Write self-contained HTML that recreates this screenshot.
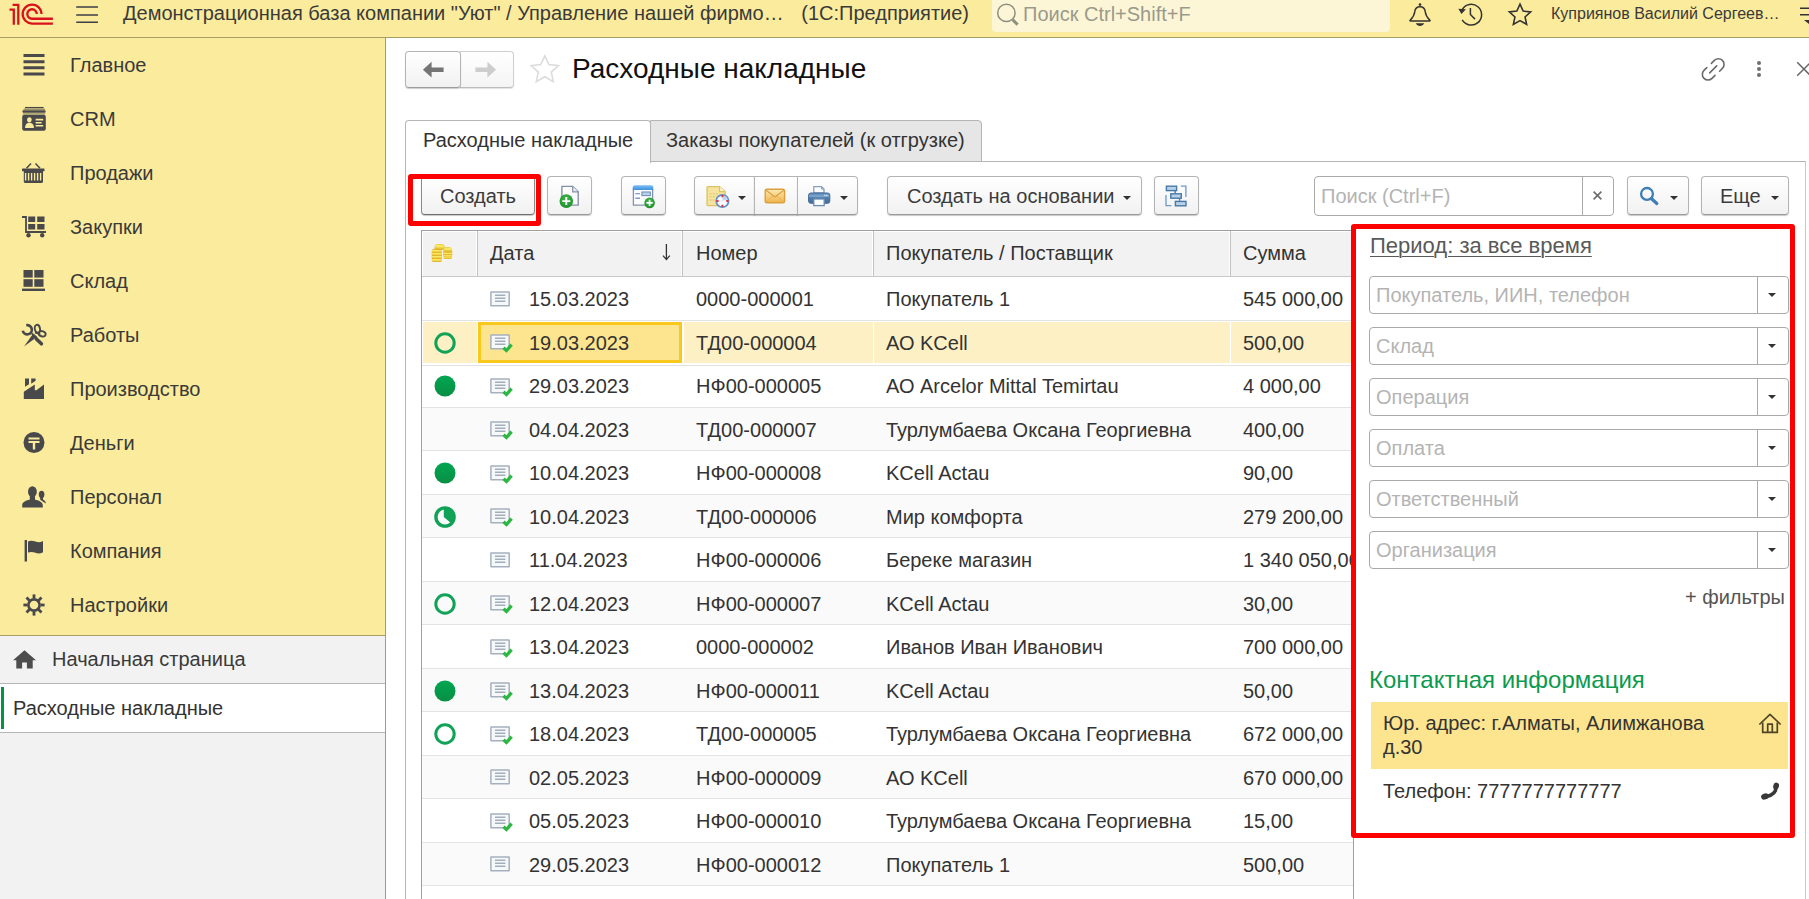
<!DOCTYPE html>
<html lang="ru">
<head>
<meta charset="utf-8">
<title>Расходные накладные</title>
<style>
*{box-sizing:border-box;margin:0;padding:0}
html,body{width:1809px;height:899px;overflow:hidden;background:#fff}
body{font-family:"Liberation Sans",sans-serif;font-size:20px;color:#333;position:relative}
.abs{position:absolute}
/* top bar */
#top{position:absolute;left:0;top:0;width:1809px;height:38px;background:#fbeb9c;border-bottom:1px solid #a89d63}
#top .title{position:absolute;left:123px;top:1px;font-size:20px;line-height:24px;color:#3a3a3a;white-space:nowrap}
#top .search{position:absolute;left:992px;top:-4px;width:398px;height:36px;background:#fdf6d6;border-radius:4px}
#top .search span{position:absolute;left:31px;top:6px;font-size:20px;line-height:24px;color:#9a9a8c;white-space:nowrap}
#top .user{position:absolute;left:1551px;top:3px;font-size:16px;line-height:22px;color:#3a3a3a;white-space:nowrap}
/* sidebar */
#side{position:absolute;left:0;top:38px;width:386px;height:598px;background:#fbeb9c;border-right:1px solid #a89d63;border-bottom:1px solid #a89d63}
#side .it{position:absolute;left:70px;font-size:20px;line-height:24px;color:#3a3a3a;white-space:nowrap}
#side svg{position:absolute}
#wins{position:absolute;left:0;top:636px;width:386px;height:263px;background:#f2f2f2;border-right:1px solid #a89d63}
#wins .r1{position:absolute;left:0;top:0;width:385px;height:48px;border-bottom:1px solid #b5b5b5}
#wins .r1 span{position:absolute;left:52px;top:11px;font-size:20px;line-height:24px;color:#3a3a3a;white-space:nowrap}
#wins .r2{position:absolute;left:0;top:48px;width:385px;height:49px;background:#fff;border-bottom:1px solid #b5b5b5}
#wins .r2 i{position:absolute;left:1px;top:3px;width:3px;height:42px;background:#009646}
#wins .r2 span{position:absolute;left:13px;top:12px;font-size:20px;line-height:24px;color:#333;white-space:nowrap}
/* buttons */
.btn{position:absolute;top:176px;height:39px;border:1px solid #b4b4b4;border-bottom-color:#9a9a9a;border-radius:4px;background:linear-gradient(#ffffff,#f1f1f1);box-shadow:0 1px 1px rgba(0,0,0,.22);font-size:20px;line-height:39px;color:#3c3c3c;white-space:nowrap;text-align:center}
.caret{position:absolute;width:0;height:0;border-left:4px solid transparent;border-right:4px solid transparent;border-top:4px solid #333}
/* table */
#tbl{position:absolute;left:421px;top:230px;width:933px;height:680px;border:1px solid #a0a0a0;overflow:hidden;background:#fff}
#tbl .hd{position:absolute;left:0;top:0;width:100%;height:46px;background:#f2f2f2;border-bottom:1px solid #c8c8c8;box-shadow:inset 1px 1px 0 #fff}
#tbl .hd span{position:absolute;top:10px;font-size:20px;line-height:24px;color:#333;white-space:nowrap}
#tbl .hd b{position:absolute;top:0;width:2px;height:45px;background:#c2c2c2;border-left:1px solid #fff}
.row{position:absolute;left:0;width:931px;height:43.5px;border-bottom:1px solid #e3e3e3;font-size:20px;line-height:24px;color:#333;white-space:nowrap}
.row.alt{background:#fafafa}
.row.sel{height:45px}
.row span{position:absolute;top:9.5px}
.row .d{left:107px}.row .n{left:274px}.row .c{left:464px}.row .s{left:821px}
.row svg{position:absolute}
.row u{position:absolute;top:1.5px;height:41px;background:#fdf0c5}
.row em{position:absolute;left:56px;top:1.5px;width:204px;height:41px;background:#fde58f;border:3px solid #f9c81d}
/* right panel */
.inp{position:absolute;left:1369px;width:420px;height:38px;border:1px solid #a9a9a9;border-radius:4px;background:#fff}
.inp span{position:absolute;left:6px;top:6px;font-size:20px;line-height:24px;color:#b4b4b4;white-space:nowrap}
.inp b{position:absolute;left:387px;top:0;width:1px;height:36px;background:#a9a9a9}
.inp i{position:absolute;left:398px;top:16px;width:0;height:0;border-left:4px solid transparent;border-right:4px solid transparent;border-top:4px solid #333}
</style>
</head>
<body>
<!-- TOPBAR -->
<div id="top">
  <svg class="abs" style="left:0;top:0" width="110" height="37" viewBox="0 0 110 37">
    <g fill="none" stroke="#d9131c" stroke-width="2.3">
      <path d="M12.6 4.8H18.3V24.8"/>
      <path d="M9.5 9.6H13.8V24.8"/>
      <path d="M41.55 14.1A9.45 9.45 0 1 0 32.1 23.55H52.9"/>
      <path d="M36.8 14.1A4.75 4.75 0 1 0 32.05 18.75H52.9"/>
    </g>
    <path d="M76.2 7H98M76.2 15H98M76.2 22.2H98" stroke="#3f3f46" stroke-width="1.5"/>
  </svg>
  <div class="title">Демонстрационная база компании "Уют" / Управление нашей фирмо…&nbsp;&nbsp; <span style="margin-left:1px">(1С:Предприятие)</span></div>
  <div class="search"><span>Поиск Ctrl+Shift+F</span></div>
  <svg class="abs" style="left:995px;top:2px" width="26" height="26" viewBox="0 0 26 26">
    <circle cx="11.4" cy="10.9" r="8.7" fill="none" stroke="#8f8f80" stroke-width="1.5"/>
    <path d="M17.6 17.6l5 5" stroke="#8f8f80" stroke-width="3"/>
  </svg>
  <svg class="abs" style="left:1405px;top:0" width="30" height="30" viewBox="0 0 30 30">
    <circle cx="15" cy="4.6" r="1.3" fill="#333"/>
    <path d="M15 6.700c-3.300 0-5 2.300-5.300 5.300-.400 3.700-1.700 5.500-4.600 8.300-.300.300-.100.700.300.700h19.200c.400 0 .600-.400.300-.700-2.900-2.800-4.200-4.600-4.600-8.300-.300-3-2-5.300-5.300-5.300z" fill="none" stroke="#333" stroke-width="1.5" stroke-linejoin="round"/>
    <path d="M10.8 23.300h8.400c-.9 1.700-2.400 2.600-4.200 2.600s-3.300-.9-4.200-2.600z" fill="#333"/>
  </svg>
  <svg class="abs" style="left:1455px;top:0" width="30" height="30" viewBox="0 0 30 30">
    <path d="M7.200 9.500A10.400 10.400 0 1 1 7.200 19.900" fill="none" stroke="#333" stroke-width="1.5"/>
    <path d="M3.400 8.800l7.500 0.500l-4.500 4.700z" fill="#333"/>
    <path d="M15.400 8.100v6.400l4.600 4.600" fill="none" stroke="#333" stroke-width="1.5"/>
  </svg>
  <svg class="abs" style="left:1505px;top:0" width="30" height="30" viewBox="0 0 30 30">
    <path d="M15 4.200l3.150 6.900l7.500 0.800l-5.600 5.100l1.600 7.400l-6.650-3.800l-6.650 3.800l1.600-7.400l-5.600-5.100l7.500-0.800z" fill="none" stroke="#333" stroke-width="1.6" stroke-linejoin="miter"/>
  </svg>
  <svg class="abs" style="left:1797px;top:4px" width="12" height="22" viewBox="0 0 12 22">
    <path d="M3 4.300h9M3 10.700h9" stroke="#333" stroke-width="1.6"/>
    <path d="M7 16l5 0l0 4z" fill="#333"/>
  </svg>
  <div class="user">Куприянов Василий Сергеев…</div>
</div>
<!-- SIDEBAR -->
<div id="side">
  <div class="it" style="top:15px">Главное</div>
  <div class="it" style="top:69px">CRM</div>
  <div class="it" style="top:123px">Продажи</div>
  <div class="it" style="top:177px">Закупки</div>
  <div class="it" style="top:231px">Склад</div>
  <div class="it" style="top:285px">Работы</div>
  <div class="it" style="top:339px">Производство</div>
  <div class="it" style="top:393px">Деньги</div>
  <div class="it" style="top:447px">Персонал</div>
  <div class="it" style="top:501px">Компания</div>
  <div class="it" style="top:555px">Настройки</div>
  <!-- sidebar icons: 28x28 boxes at left:20, top:13+54*i -->
  <svg style="left:20px;top:13px" width="28" height="28" viewBox="0 0 28 28"><path d="M3.500 4.500h21M3.500 10.700h21M3.500 16.800h21M3.500 22.900h21" stroke="#49494b" stroke-width="3"/></svg>
  <svg style="left:20px;top:67px" width="28" height="28" viewBox="0 0 28 28">
    <path d="M5 2.600h18.600" stroke="#49494b" stroke-width="1.300"/>
    <path d="M4 3.600h20.600l.8 1.400h-22.200z" fill="#9b9268"/>
    <rect x="2.400" y="5.200" width="23.200" height="2.600" rx="1" fill="#49494b"/>
    <path d="M2.800 8h22.400v1.600h-22.400z" fill="#b3a873"/>
    <rect x="2.200" y="9.800" width="23.600" height="16" rx="2" fill="#49494b"/>
    <ellipse cx="9.400" cy="14.800" rx="2.300" ry="2.600" fill="#fbeb9c"/>
    <path d="M5 23c0-3.400 1.800-5.300 4.400-5.300s4.600 1.900 4.600 5.300z" fill="#fbeb9c"/>
    <path d="M15.600 14.600h7.600M15.600 17.800h6M15.600 20.800h7.600" stroke="#fbeb9c" stroke-width="1.600"/>
  </svg>
  <svg style="left:20px;top:121px" width="28" height="28" viewBox="0 0 28 28">
    <path d="M6.500 9.200l4.500-4.700M20 9.200l-4.500-4.700" stroke="#49494b" stroke-width="1.500" fill="none"/>
    <rect x="2" y="9.400" width="22.500" height="2.800" rx=".6" fill="#49494b"/>
    <path d="M3.800 12h19.200v10.400a1.600 1.600 0 0 1-1.600 1.600h-16a1.600 1.600 0 0 1-1.600-1.600z" fill="#49494b"/>
    <path d="M5.600 14v7.500M8.600 14v7.500M11.600 14v7.500M14.600 14v7.500M17.600 14v7.500M20.600 14v7.500" stroke="#fbeb9c" stroke-width="1.400"/>
  </svg>
  <svg style="left:20px;top:175px" width="28" height="28" viewBox="0 0 28 28">
    <path d="M2 4h4v15h20" fill="none" stroke="#49494b" stroke-width="1.800"/>
    <rect x="8.200" y="3.500" width="7" height="5.500" fill="#49494b"/><rect x="17.200" y="3.500" width="7.300" height="5.500" fill="#49494b"/>
    <rect x="8.200" y="11" width="7" height="5.500" fill="#49494b"/><rect x="17.200" y="11" width="7.300" height="5.500" fill="#49494b"/>
    <circle cx="8.500" cy="22.200" r="2.200" fill="#49494b"/><circle cx="22.200" cy="22.200" r="2.200" fill="#49494b"/>
  </svg>
  <svg style="left:20px;top:229px" width="28" height="28" viewBox="0 0 28 28">
    <rect x="3.500" y="3" width="9.200" height="7.600" fill="#49494b"/><rect x="14.300" y="3" width="9.200" height="7.600" fill="#49494b"/>
    <rect x="3.500" y="12.200" width="9.200" height="7.600" fill="#49494b"/><rect x="14.300" y="12.200" width="9.200" height="7.600" fill="#49494b"/>
    <rect x="2" y="21.600" width="23" height="2.400" fill="#49494b"/>
  </svg>
  <svg style="left:20px;top:283px" width="28" height="28" viewBox="0 0 28 28">
    <path d="M2.600 8.800A4.600 4.600 0 1 0 7.200 4.200" fill="none" stroke="#49494b" stroke-width="2.600" transform="rotate(-12 7 8.600)"/>
    <ellipse cx="17.400" cy="7.800" rx="2.600" ry="4" fill="none" stroke="#49494b" stroke-width="1.900" transform="rotate(-12 17.400 7.800)"/>
    <ellipse cx="22.200" cy="12.800" rx="3.500" ry="2.600" fill="none" stroke="#49494b" stroke-width="1.900" transform="rotate(18 22.200 12.800)"/>
    <path d="M13.200 12.600l4 3.200l-13.200 9.800z" fill="#49494b"/>
    <path d="M11.500 12.200l5.400 5.200" stroke="#49494b" stroke-width="1.600"/>
    <path d="M16.400 18l5 4.800" stroke="#49494b" stroke-width="3.600" stroke-linecap="round"/>
    <path d="M15 11.600l5.300 1.400" stroke="#49494b" stroke-width="1.800"/>
  </svg>
  <svg style="left:20px;top:337px" width="28" height="28" viewBox="0 0 28 28">
    <path d="M3.800 16.800L14.800 9.600V14.800L16 15.600L24 9.400V24H3.800z" fill="#49494b"/>
    <path d="M5 3.600h4v5.600l-4 2.600z" fill="#49494b"/>
    <path d="M11.200 3.600h4.400v2.200l-4.400 3z" fill="#49494b"/>
  </svg>
  <svg style="left:20px;top:391px" width="28" height="28" viewBox="0 0 28 28">
    <circle cx="14" cy="13.500" r="10.500" fill="#49494b"/>
    <path d="M8.500 8.500h11v2.100h-11zM8.500 12h11v2.100h-4.300v6.400h-2.400v-6.400h-4.300z" fill="#fbeb9c"/>
  </svg>
  <svg style="left:20px;top:445px" width="28" height="28" viewBox="0 0 28 28">
    <ellipse cx="21.600" cy="11.400" rx="2.800" ry="3.700" fill="#49494b"/>
    <path d="M20.200 13.500h2.800v3c1.600.8 2.800 1.800 2.800 4.100l-2.300-1.600l-3.300-2.200z" fill="#49494b"/>
    <ellipse cx="12.400" cy="8.700" rx="4.400" ry="5.500" fill="#49494b"/>
    <path d="M9.800 12h5.200v4.600c3.400 1 7.800 2.200 7.800 5.800v2h-20.600v-2c0-3.600 4.200-4.800 7.600-5.800z" fill="#49494b"/>
  </svg>
  <svg style="left:20px;top:499px" width="28" height="28" viewBox="0 0 28 28">
    <rect x="4.600" y="3" width="2.400" height="21.500" fill="#49494b"/>
    <path d="M8 4.400c2.600-1.200 5.200-.6 7.500.200s4.800 1 7.500-.600v11.200c-2.700 1.600-5.200 1.400-7.500.600s-4.900-1.400-7.500-.200z" fill="#49494b"/>
  </svg>
  <svg style="left:20px;top:553px" width="28" height="28" viewBox="0 0 28 28">
    <g transform="translate(14 14)">
      <circle r="5.600" fill="none" stroke="#49494b" stroke-width="2.600"/>
      <g stroke="#49494b" stroke-width="2.800">
        <path d="M0 -6.500V-10.600"/><path d="M0 -6.500V-10.600" transform="rotate(45)"/><path d="M0 -6.500V-10.600" transform="rotate(90)"/><path d="M0 -6.500V-10.600" transform="rotate(135)"/>
        <path d="M0 -6.500V-10.600" transform="rotate(180)"/><path d="M0 -6.500V-10.600" transform="rotate(225)"/><path d="M0 -6.500V-10.600" transform="rotate(270)"/><path d="M0 -6.500V-10.600" transform="rotate(315)"/>
      </g>
    </g>
  </svg>
</div>
<div id="wins">
  <div class="r1"><span>Начальная страница</span><svg class="abs" style="left:12px;top:13px" width="26" height="21" viewBox="0 0 26 21"><path d="M12.500 1.200L24 11.200h-3.300v8.300h-5.800v-6h-4.800v6H4.300v-8.300H1z" fill="#4d4d4d"/></svg></div>
  <div class="r2"><i></i><span>Расходные накладные</span></div>
</div>
<!-- MAIN HEADER -->
<div id="main">
  <div class="abs" style="left:460px;top:51px;width:54px;height:37px;border:1px solid #cfcfcf;border-left:none;border-bottom-color:#bdbdbd;border-radius:0 4px 4px 0;background:linear-gradient(#fff,#f4f4f4);box-shadow:0 1px 1px rgba(0,0,0,.12)"></div>
  <div class="abs" style="left:405px;top:51px;width:56px;height:37px;border:1px solid #b4b4b4;border-bottom-color:#9c9c9c;border-radius:4px;background:linear-gradient(#fff,#f1f1f1);box-shadow:0 1px 1px rgba(0,0,0,.2)"></div>
  <svg class="abs" style="left:420px;top:60px" width="26" height="20" viewBox="0 0 26 20"><path d="M2.900 9.700l8.700-7.900v5.600h12v4.600h-12v5.600z" fill="#757575"/></svg>
  <svg class="abs" style="left:473px;top:60px" width="26" height="20" viewBox="0 0 26 20"><path d="M23.100 9.700l-8.700-7.900v5.600h-12v4.600h12v5.600z" fill="#cdcdcd"/></svg>
  <svg class="abs" style="left:528px;top:52px" width="34" height="34" viewBox="0 0 34 34"><path d="M16.800 3.800l4.050 8.800l9.600 1.050l-7.150 6.500l2 9.450l-8.500-4.850l-8.500 4.850l2-9.450l-7.150-6.500l9.600-1.050z" fill="none" stroke="#dcdcdc" stroke-width="1.6"/></svg>
  <div class="abs" style="left:572px;top:52px;font-size:28px;line-height:34px;color:#111;white-space:nowrap">Расходные накладные</div>
  <svg class="abs" style="left:1699px;top:56px" width="28" height="28" viewBox="0 0 28 28">
    <g fill="none" stroke="#6b6b6b" stroke-width="1.600" stroke-linecap="round">
      <path d="M12.400 7.400L15.400 4.400A5.600 5.600 0 0 1 23.400 12.400L20.600 15.200"/>
      <path d="M16 19.400L13 22.400A5.600 5.600 0 0 1 5 14.400L7.800 11.600"/>
      <path d="M10.700 16.900L17.700 9.900"/>
    </g>
  </svg>
  <svg class="abs" style="left:1754px;top:58px" width="10" height="22" viewBox="0 0 10 22"><circle cx="5" cy="5.100" r="2" fill="#6e6e6e"/><circle cx="5" cy="11.050" r="2" fill="#6e6e6e"/><circle cx="5" cy="17" r="2" fill="#6e6e6e"/></svg>
  <svg class="abs" style="left:1795px;top:60px" width="14" height="18" viewBox="0 0 14 18"><path d="M2.200 2.300l13.500 13.500M2.200 15.800l13.500-13.500" stroke="#666" stroke-width="1.500"/></svg>
  <!-- tabs -->
  <div class="abs" style="left:405px;top:161px;width:1401px;height:760px;border:1px solid #b5b5b5;border-right-color:#c8c8c8"></div>
  <div class="abs" style="left:650px;top:120px;width:332px;height:42px;background:#e6e6e6;border:1px solid #b5b5b5;border-radius:0 4px 0 0"></div>
  <div class="abs" style="left:405px;top:120px;width:246px;height:43px;background:#fff;border:1px solid #b5b5b5;border-bottom:none;border-radius:4px 4px 0 0"></div>
  <div class="abs" style="left:423px;top:128px;font-size:20px;line-height:24px;color:#333;white-space:nowrap">Расходные накладные</div>
  <div class="abs" style="left:666px;top:128px;font-size:20px;line-height:24px;color:#333;white-space:nowrap">Заказы покупателей (к отгрузке)</div>
  <!-- toolbar -->
  <div class="btn" style="left:421px;width:114px;border-color:#8a8a8a;border-bottom-color:#6e6e6e">Создать</div>
  <div class="btn" style="left:547px;width:45px">
    <svg class="abs" style="left:0;top:0" width="43" height="37" viewBox="0 0 43 37">
      <defs><radialGradient id="gp" cx=".5" cy=".35" r=".75"><stop offset="0" stop-color="#43b84c"/><stop offset="1" stop-color="#178a27"/></radialGradient>
      <linearGradient id="tb" x1="0" y1="0" x2="0" y2="1"><stop offset="0" stop-color="#79bdf6"/><stop offset="1" stop-color="#3f8fdb"/></linearGradient></defs>
      <path d="M13.900 9.400h10.800l5.500 5.400v13.300h-16.300z" fill="#fdfdfe" stroke="#8391a8" stroke-width="1.400"/>
      <path d="M24.700 9.400v5.400h5.500" fill="#e8edf3" stroke="#8391a8" stroke-width="1.200"/>
      <circle cx="18.300" cy="24.100" r="6.800" fill="url(#gp)"/>
      <path d="M18.300 20.100v8M14.300 24.100h8" stroke="#fff" stroke-width="1.900"/>
    </svg>
  </div>
  <div class="btn" style="left:621px;width:45px">
    <svg class="abs" style="left:0;top:0" width="43" height="37" viewBox="0 0 43 37">
      <path d="M11.400 12h19.200v16.200h-19.200z" fill="#fdfdfe" stroke="#8391a8" stroke-width="1.300"/>
      <path d="M10.800 13v-2.700a2 2 0 0 1 2-2h16.400a2 2 0 0 1 2 2v2.700z" fill="url(#tb)"/>
      <path d="M13.300 16.600h4.700M13.300 21.200h4.700" stroke="#7f9cc0" stroke-width="1.400"/>
      <rect x="19.900" y="15" width="8.400" height="3.600" fill="#bcd0e8" stroke="#6f92bf" stroke-width="1.100"/>
      <circle cx="27.600" cy="25.900" r="5.300" fill="url(#gp)"/>
      <path d="M27.600 22.700v6.400M24.400 25.900h6.400" stroke="#fff" stroke-width="1.700"/>
    </svg>
  </div>
  <div class="btn" style="left:694px;width:61px;border-radius:4px 0 0 4px">
    <svg class="abs" style="left:0;top:0" width="60" height="37" viewBox="0 0 60 37">
      <path d="M12.100 10.400a.8.8 0 0 1 .8-.8h11.600l5.600 5v13.200a.8.8 0 0 1-.8.800h-16.400a.8.8 0 0 1-.8-.800z" fill="#f6e49e" stroke="#dcc365" stroke-width="1.400"/>
      <path d="M24.500 9.600v5h5.600" fill="#fbf1c8" stroke="#dcc365" stroke-width="1.100"/>
      <path d="M14.500 16.800h9M14.500 19.700h7M14.500 23h5" stroke="#e3cd7d" stroke-width="1.300" stroke-dasharray="2.200 1"/>
      <circle cx="27.400" cy="24" r="6.200" fill="#fafcff" stroke="#6391c9" stroke-width="1.700"/>
      <path d="M27.400 24V18.600A5.400 5.400 0 0 1 32.500 22.300z" fill="#bcd3ee"/>
      <path d="M27.400 19.800V24h-3" fill="none" stroke="#e8eef6" stroke-width="1.400"/>
      <path d="M27.400 18v2.200M27.400 27.800V30M21.400 24h2.200M31.200 24h2.200" stroke="#e8313a" stroke-width="1.900"/>
    </svg>
    <i class="caret" style="left:43px;top:19px"></i>
  </div>
  <div class="btn" style="left:754px;width:44px;border-radius:0">
    <svg class="abs" style="left:0;top:0" width="41" height="37" viewBox="0 0 41 37">
      <defs><linearGradient id="ev" x1="0" y1="0" x2="0" y2="1"><stop offset="0" stop-color="#fce9b6"/><stop offset="1" stop-color="#f1b548"/></linearGradient></defs>
      <rect x="10.200" y="12.300" width="19.400" height="13.400" rx="1.800" fill="url(#ev)" stroke="#dba03d" stroke-width="1.400"/>
      <path d="M11 13.200l8.900 6.700l8.900-6.700" fill="none" stroke="#d9a041" stroke-width="1.200"/>
      <path d="M11.200 25l6.700-6M28.600 25l-6.700-6" fill="none" stroke="#e6b35a" stroke-width="1"/>
    </svg>
  </div>
  <div class="btn" style="left:797px;width:61px;border-radius:0 4px 4px 0">
    <svg class="abs" style="left:0;top:0" width="59" height="37" viewBox="0 0 59 37">
      <defs><linearGradient id="pr" x1="0" y1="0" x2="0" y2="1"><stop offset="0" stop-color="#5d8bb9"/><stop offset=".35" stop-color="#7ea5cc"/><stop offset=".45" stop-color="#4f7dac"/><stop offset="1" stop-color="#456f9c"/></linearGradient></defs>
      <path d="M15.800 16V9.600h7.700l2.500 2.500V16z" fill="#fdfeff" stroke="#8aa0bd" stroke-width="1.300"/>
      <path d="M23.500 9.600v2.500h2.500" fill="none" stroke="#8aa0bd" stroke-width="1"/>
      <rect x="10.600" y="16" width="21.200" height="10.300" rx="2.200" fill="url(#pr)" stroke="#42699a" stroke-width="1"/>
      <rect x="15.800" y="22" width="10.400" height="6.600" fill="#fdfeff" stroke="#6b8bb2" stroke-width="1.300"/>
      <path d="M26.300 18.400h1.200M28.300 18.400h1.200" stroke="#e8f0fa" stroke-width="1.200"/>
    </svg>
    <i class="caret" style="left:42px;top:19px"></i>
  </div>
  <div class="btn" style="left:887px;width:255px;text-align:left;padding-left:19px">Создать на основании<i class="caret" style="left:235px;top:19px"></i></div>
  <div class="btn" style="left:1154px;width:45px">
    <svg class="abs" style="left:-1px;top:-1px" width="45" height="39" viewBox="0 0 45 39">
      <path d="M26.900 10.100h5v11" fill="none" stroke="#6d9ac6" stroke-width="1.300"/>
      <path d="M12 19v10.700h5.400" fill="none" stroke="#6d9ac6" stroke-width="1.300"/>
      <path d="M21.100 15v2.200M25.600 22.600v2.200" stroke="#4679a8" stroke-width="1.400"/>
      <rect x="12.400" y="10.200" width="10.200" height="4.400" fill="#b9d0e7" stroke="#4679a8" stroke-width="1.400"/>
      <rect x="16.800" y="17.800" width="10.500" height="4.400" fill="#b9d0e7" stroke="#4679a8" stroke-width="1.400"/>
      <rect x="21.400" y="25.400" width="10.600" height="4.400" fill="#b9d0e7" stroke="#4679a8" stroke-width="1.400"/>
    </svg>
  </div>
  <!-- search -->
  <div class="abs" style="left:1314px;top:176px;width:300px;height:40px;border:1px solid #a9a9a9;border-radius:4px;background:#fff">
    <span class="abs" style="left:6px;top:7px;font-size:20px;line-height:24px;color:#b4b4b4;white-space:nowrap">Поиск (Ctrl+F)</span>
    <b class="abs" style="left:267px;top:0;width:1px;height:38px;background:#a9a9a9"></b>
    <svg class="abs" style="left:278px;top:14px" width="9" height="9" viewBox="0 0 9 9"><path d="M.6.6l7.800 7.800M8.400.6l-7.800 7.800" stroke="#6a6a6a" stroke-width="1.500"/></svg>
  </div>
  <div class="btn" style="left:1627px;width:62px">
    <svg class="abs" style="left:11px;top:8px" width="22" height="22" viewBox="0 0 22 22">
      <circle cx="8" cy="8.900" r="5.900" fill="none" stroke="#3d7fb5" stroke-width="2.300"/>
      <path d="M12.600 13.800l5.200 4.700" stroke="#3d7fb5" stroke-width="3.200" stroke-linecap="round"/>
    </svg>
    <i class="caret" style="left:42px;top:19px"></i>
  </div>
  <div class="btn" style="left:1701px;width:88px;text-align:left;padding-left:18px">Еще<i class="caret" style="left:69px;top:19px"></i></div>
  <!-- red highlight around Создать -->
  <div class="abs" style="left:408px;top:174px;width:133px;height:52px;border:5px solid #ff0000;border-radius:3px"></div>
  <!-- table -->
  <svg width="0" height="0" style="position:absolute"><defs>
    <linearGradient id="gg" x1="0" y1="0" x2="0" y2="1"><stop offset="0" stop-color="#00a651"/><stop offset="1" stop-color="#0a8f45"/></linearGradient>
                      </defs></svg>
  <div id="tbl">
    <div class="hd">
      <svg class="abs" style="left:9px;top:13px" width="23" height="19" viewBox="0 0 23 19">
        <defs><linearGradient id="cg" x1="0" y1="0" x2="0" y2="1"><stop offset="0" stop-color="#f3d23a"/><stop offset=".35" stop-color="#fff06e"/><stop offset="1" stop-color="#d9a81c"/></linearGradient></defs>
        <rect x="12.300" y="3.200" width="8.900" height="11.700" rx="3.600" fill="#e2b52a"/>
        <rect x="12.300" y="3.200" width="8.900" height="5" rx="3.200" fill="url(#cg)"/>
        <rect x="12.300" y="8.500" width="8.900" height="2.400" rx="1.200" fill="url(#cg)"/>
        <rect x="12.300" y="11.100" width="8.900" height="2.200" rx="1.100" fill="url(#cg)"/>
        <rect x="12.500" y="13.300" width="8.500" height="1.600" rx=".8" fill="url(#cg)"/>
        <rect x=".8" y="4.600" width="10" height="13.300" rx="3" fill="#e2b52a"/>
        <rect x=".8" y="5.800" width="10" height="2.800" rx="1.400" fill="url(#cg)"/>
        <rect x=".8" y="8.800" width="10" height="2.700" rx="1.350" fill="url(#cg)"/>
        <rect x=".8" y="11.700" width="10" height="2.800" rx="1.400" fill="url(#cg)"/>
        <rect x=".8" y="14.700" width="10" height="3.200" rx="1.600" fill="url(#cg)"/>
        <ellipse cx="8.700" cy="2.900" rx="4.800" ry="2.900" fill="url(#cg)" stroke="#e0b12a" stroke-width=".5"/>
      </svg>
      <b style="left:54px"></b><span style="left:68px">Дата</span>
      <svg class="abs" style="left:238px;top:12px" width="12" height="19" viewBox="0 0 12 19"><path d="M6.400 1v15.800M3 12.600l3.400 4l3.400-4" fill="none" stroke="#333" stroke-width="1.300"/></svg>
      <b style="left:259px"></b><span style="left:274px">Номер</span>
      <b style="left:450px"></b><span style="left:464px">Покупатель / Поставщик</span>
      <b style="left:807px"></b><span style="left:821px">Сумма</span>
    </div>
    <div class="row" style="top:46px"><svg style="left:68px;top:14px" width="25" height="21"><rect x="0.900" y="0.900" width="18.300" height="13.900" rx=".4" fill="#f7f8fa" stroke="#a5b0bf" stroke-width="1.500"/><path d="M5 4.200h10.400M5 7.200h10.400M5 10.200h10.400" stroke="#a3aebc" stroke-width="1.400"/></svg><span class="d" style="top:10px">15.03.2023</span><span class="n" style="top:10px">0000-000001</span><span class="c" style="top:10px">Покупатель 1</span><span class="s" style="top:10px">545 000,00</span></div>
    <div class="row sel" style="top:89.5px"><u style="left:1px;width:54px"></u><u style="left:262px;width:189px"></u><u style="left:452px;width:356px"></u><u style="left:809px;width:123px"></u><em></em><svg style="left:12px;top:11.5px" width="22" height="22"><circle cx="11" cy="11" r="9.200" fill="none" stroke="#10a257" stroke-width="3"/></svg><svg style="left:68px;top:13.5px" width="25" height="21"><rect x="0.900" y="0.900" width="18.300" height="13.900" rx=".4" fill="#f7f8fa" stroke="#a5b0bf" stroke-width="1.500"/><path d="M5 4.200h10.400M5 7.200h10.400M5 10.200h10.400" stroke="#a3aebc" stroke-width="1.400"/><path d="M13.500 13.800L16.400 16.500L21.600 10.700" fill="none" stroke="#2bb840" stroke-width="3.300"/></svg><span class="d" style="top:10.5px">19.03.2023</span><span class="n" style="top:10.5px">ТД00-000004</span><span class="c" style="top:10.5px">АО KCell</span><span class="s" style="top:10.5px">500,00</span></div>
    <div class="row" style="top:133px"><svg style="left:12px;top:11px" width="22" height="22"><circle cx="11" cy="11" r="10.500" fill="url(#gg)"/></svg><svg style="left:68px;top:14px" width="25" height="21"><rect x="0.900" y="0.900" width="18.300" height="13.900" rx=".4" fill="#f7f8fa" stroke="#a5b0bf" stroke-width="1.500"/><path d="M5 4.200h10.400M5 7.200h10.400M5 10.200h10.400" stroke="#a3aebc" stroke-width="1.400"/><path d="M13.500 13.800L16.400 16.500L21.600 10.700" fill="none" stroke="#2bb840" stroke-width="3.300"/></svg><span class="d" style="top:10px">29.03.2023</span><span class="n" style="top:10px">НФ00-000005</span><span class="c" style="top:10px">АО Arcelor Mittal Temirtau</span><span class="s" style="top:10px">4 000,00</span></div>
    <div class="row alt" style="top:176.5px"><svg style="left:68px;top:13.5px" width="25" height="21"><rect x="0.900" y="0.900" width="18.300" height="13.900" rx=".4" fill="#f7f8fa" stroke="#a5b0bf" stroke-width="1.500"/><path d="M5 4.200h10.400M5 7.200h10.400M5 10.200h10.400" stroke="#a3aebc" stroke-width="1.400"/><path d="M13.500 13.800L16.400 16.500L21.600 10.700" fill="none" stroke="#2bb840" stroke-width="3.300"/></svg><span class="d" style="top:10.5px">04.04.2023</span><span class="n" style="top:10.5px">ТД00-000007</span><span class="c" style="top:10.5px">Турлумбаева Оксана Георгиевна</span><span class="s" style="top:10.5px">400,00</span></div>
    <div class="row" style="top:220px"><svg style="left:12px;top:11px" width="22" height="22"><circle cx="11" cy="11" r="10.500" fill="url(#gg)"/></svg><svg style="left:68px;top:14px" width="25" height="21"><rect x="0.900" y="0.900" width="18.300" height="13.900" rx=".4" fill="#f7f8fa" stroke="#a5b0bf" stroke-width="1.500"/><path d="M5 4.200h10.400M5 7.200h10.400M5 10.200h10.400" stroke="#a3aebc" stroke-width="1.400"/><path d="M13.500 13.800L16.400 16.500L21.600 10.700" fill="none" stroke="#2bb840" stroke-width="3.300"/></svg><span class="d" style="top:10px">10.04.2023</span><span class="n" style="top:10px">НФ00-000008</span><span class="c" style="top:10px">KCell Actau</span><span class="s" style="top:10px">90,00</span></div>
    <div class="row alt" style="top:263.5px"><svg style="left:12px;top:11.5px" width="22" height="22"><circle cx="11" cy="11" r="9.100" fill="none" stroke="#10a257" stroke-width="3.400"/><path d="M9.800 11L9.800 2.100A9.200 9.200 0 0 1 17.500 17.500Z" fill="#10a257"/></svg><svg style="left:68px;top:13.5px" width="25" height="21"><rect x="0.900" y="0.900" width="18.300" height="13.900" rx=".4" fill="#f7f8fa" stroke="#a5b0bf" stroke-width="1.500"/><path d="M5 4.200h10.400M5 7.200h10.400M5 10.200h10.400" stroke="#a3aebc" stroke-width="1.400"/><path d="M13.500 13.800L16.400 16.500L21.600 10.700" fill="none" stroke="#2bb840" stroke-width="3.300"/></svg><span class="d" style="top:10.5px">10.04.2023</span><span class="n" style="top:10.5px">ТД00-000006</span><span class="c" style="top:10.5px">Мир комфорта</span><span class="s" style="top:10.5px">279 200,00</span></div>
    <div class="row" style="top:307px"><svg style="left:68px;top:14px" width="25" height="21"><rect x="0.900" y="0.900" width="18.300" height="13.900" rx=".4" fill="#f7f8fa" stroke="#a5b0bf" stroke-width="1.500"/><path d="M5 4.200h10.400M5 7.200h10.400M5 10.200h10.400" stroke="#a3aebc" stroke-width="1.400"/></svg><span class="d" style="top:10px">11.04.2023</span><span class="n" style="top:10px">НФ00-000006</span><span class="c" style="top:10px">Береке магазин</span><span class="s" style="top:10px">1 340 050,00</span></div>
    <div class="row alt" style="top:350.5px"><svg style="left:12px;top:11.5px" width="22" height="22"><circle cx="11" cy="11" r="9.200" fill="none" stroke="#10a257" stroke-width="3"/></svg><svg style="left:68px;top:13.5px" width="25" height="21"><rect x="0.900" y="0.900" width="18.300" height="13.900" rx=".4" fill="#f7f8fa" stroke="#a5b0bf" stroke-width="1.500"/><path d="M5 4.200h10.400M5 7.200h10.400M5 10.200h10.400" stroke="#a3aebc" stroke-width="1.400"/><path d="M13.500 13.800L16.400 16.500L21.600 10.700" fill="none" stroke="#2bb840" stroke-width="3.300"/></svg><span class="d" style="top:10.5px">12.04.2023</span><span class="n" style="top:10.5px">НФ00-000007</span><span class="c" style="top:10.5px">KCell Actau</span><span class="s" style="top:10.5px">30,00</span></div>
    <div class="row" style="top:394px"><svg style="left:68px;top:14px" width="25" height="21"><rect x="0.900" y="0.900" width="18.300" height="13.900" rx=".4" fill="#f7f8fa" stroke="#a5b0bf" stroke-width="1.500"/><path d="M5 4.200h10.400M5 7.200h10.400M5 10.200h10.400" stroke="#a3aebc" stroke-width="1.400"/><path d="M13.500 13.800L16.400 16.500L21.600 10.700" fill="none" stroke="#2bb840" stroke-width="3.300"/></svg><span class="d" style="top:10px">13.04.2023</span><span class="n" style="top:10px">0000-000002</span><span class="c" style="top:10px">Иванов Иван Иванович</span><span class="s" style="top:10px">700 000,00</span></div>
    <div class="row alt" style="top:437.5px"><svg style="left:12px;top:11.5px" width="22" height="22"><circle cx="11" cy="11" r="10.500" fill="url(#gg)"/></svg><svg style="left:68px;top:13.5px" width="25" height="21"><rect x="0.900" y="0.900" width="18.300" height="13.900" rx=".4" fill="#f7f8fa" stroke="#a5b0bf" stroke-width="1.500"/><path d="M5 4.200h10.400M5 7.200h10.400M5 10.200h10.400" stroke="#a3aebc" stroke-width="1.400"/><path d="M13.500 13.800L16.400 16.500L21.600 10.700" fill="none" stroke="#2bb840" stroke-width="3.300"/></svg><span class="d" style="top:10.5px">13.04.2023</span><span class="n" style="top:10.5px">НФ00-000011</span><span class="c" style="top:10.5px">KCell Actau</span><span class="s" style="top:10.5px">50,00</span></div>
    <div class="row" style="top:481px"><svg style="left:12px;top:11px" width="22" height="22"><circle cx="11" cy="11" r="9.200" fill="none" stroke="#10a257" stroke-width="3"/></svg><svg style="left:68px;top:14px" width="25" height="21"><rect x="0.900" y="0.900" width="18.300" height="13.900" rx=".4" fill="#f7f8fa" stroke="#a5b0bf" stroke-width="1.500"/><path d="M5 4.200h10.400M5 7.200h10.400M5 10.200h10.400" stroke="#a3aebc" stroke-width="1.400"/><path d="M13.500 13.800L16.400 16.500L21.600 10.700" fill="none" stroke="#2bb840" stroke-width="3.300"/></svg><span class="d" style="top:10px">18.04.2023</span><span class="n" style="top:10px">ТД00-000005</span><span class="c" style="top:10px">Турлумбаева Оксана Георгиевна</span><span class="s" style="top:10px">672 000,00</span></div>
    <div class="row alt" style="top:524.5px"><svg style="left:68px;top:13.5px" width="25" height="21"><rect x="0.900" y="0.900" width="18.300" height="13.900" rx=".4" fill="#f7f8fa" stroke="#a5b0bf" stroke-width="1.500"/><path d="M5 4.200h10.400M5 7.200h10.400M5 10.200h10.400" stroke="#a3aebc" stroke-width="1.400"/></svg><span class="d" style="top:10.5px">02.05.2023</span><span class="n" style="top:10.5px">НФ00-000009</span><span class="c" style="top:10.5px">АО KCell</span><span class="s" style="top:10.5px">670 000,00</span></div>
    <div class="row" style="top:568px"><svg style="left:68px;top:14px" width="25" height="21"><rect x="0.900" y="0.900" width="18.300" height="13.900" rx=".4" fill="#f7f8fa" stroke="#a5b0bf" stroke-width="1.500"/><path d="M5 4.200h10.400M5 7.200h10.400M5 10.200h10.400" stroke="#a3aebc" stroke-width="1.400"/><path d="M13.500 13.800L16.400 16.500L21.600 10.700" fill="none" stroke="#2bb840" stroke-width="3.300"/></svg><span class="d" style="top:10px">05.05.2023</span><span class="n" style="top:10px">НФ00-000010</span><span class="c" style="top:10px">Турлумбаева Оксана Георгиевна</span><span class="s" style="top:10px">15,00</span></div>
    <div class="row alt" style="top:611.5px"><svg style="left:68px;top:13.5px" width="25" height="21"><rect x="0.900" y="0.900" width="18.300" height="13.900" rx=".4" fill="#f7f8fa" stroke="#a5b0bf" stroke-width="1.500"/><path d="M5 4.200h10.400M5 7.200h10.400M5 10.200h10.400" stroke="#a3aebc" stroke-width="1.400"/></svg><span class="d" style="top:10.5px">29.05.2023</span><span class="n" style="top:10.5px">НФ00-000012</span><span class="c" style="top:10.5px">Покупатель 1</span><span class="s" style="top:10.5px">500,00</span></div>
  </div>
  <!-- right filter panel -->
  <div class="abs" style="left:1354px;top:226px;width:440px;height:610px;background:#fff"></div>
  <div class="abs" style="left:1370px;top:234px;font-size:22px;line-height:24px;color:#595959;white-space:nowrap;text-decoration:underline;text-underline-offset:2.5px;text-decoration-thickness:1.3px">Период: за все время</div>
  <div class="inp" style="top:276px"><span>Покупатель, ИИН, телефон</span><b></b><i></i></div>
  <div class="inp" style="top:327px"><span>Склад</span><b></b><i></i></div>
  <div class="inp" style="top:378px"><span>Операция</span><b></b><i></i></div>
  <div class="inp" style="top:429px"><span>Оплата</span><b></b><i></i></div>
  <div class="inp" style="top:480px"><span>Ответственный</span><b></b><i></i></div>
  <div class="inp" style="top:531px"><span>Организация</span><b></b><i></i></div>
  <div class="abs" style="left:1585px;top:585px;width:200px;text-align:right;font-size:20px;line-height:24px;color:#555;white-space:nowrap">+ фильтры</div>
  <div class="abs" style="left:1369px;top:665px;font-size:24px;line-height:30px;color:#0c9a4e;white-space:nowrap">Контактная информация</div>
  <div class="abs" style="left:1371px;top:702px;width:417px;height:67px;background:#fde48f"></div>
  <div class="abs" style="left:1383px;top:712px;width:360px;font-size:20px;line-height:23.5px;color:#333">Юр. адрес: г.Алматы, Алимжанова д.30</div>
  <svg class="abs" style="left:1758px;top:713px" width="24" height="21" viewBox="0 0 24 21">
    <g fill="none" stroke="#4f4526" stroke-width="1.700" stroke-linecap="round" stroke-linejoin="round">
      <path d="M1.900 11L12 1.400L22.100 11"/>
      <path d="M4.700 9.400V19.400H19.300V9.400" stroke-linecap="butt"/>
      <path d="M9.700 19.400V11.200h4.600v8.200" stroke-linecap="butt"/>
    </g>
  </svg>
  <div class="abs" style="left:1383px;top:779px;font-size:20px;line-height:24px;color:#333;white-space:nowrap">Телефон: 7777777777777</div>
  <svg class="abs" style="left:1760px;top:782px" width="20" height="19" viewBox="0 0 20 19">
    <path d="M16 5Q16.300 12.600 5.800 14.800" fill="none" stroke="#383838" stroke-width="3.500" stroke-linecap="round"/>
    <ellipse cx="16.100" cy="4.100" rx="2.900" ry="3.500" fill="#383838" transform="rotate(14 16.100 4.100)"/>
    <ellipse cx="4.900" cy="14.500" rx="3.900" ry="3" fill="#383838" transform="rotate(-20 4.900 14.500)"/>
  </svg>
  <div class="abs" style="left:1351px;top:224px;width:444px;height:614px;border:5px solid #ff0000;border-radius:3px"></div>
</div>
</body>
</html>
